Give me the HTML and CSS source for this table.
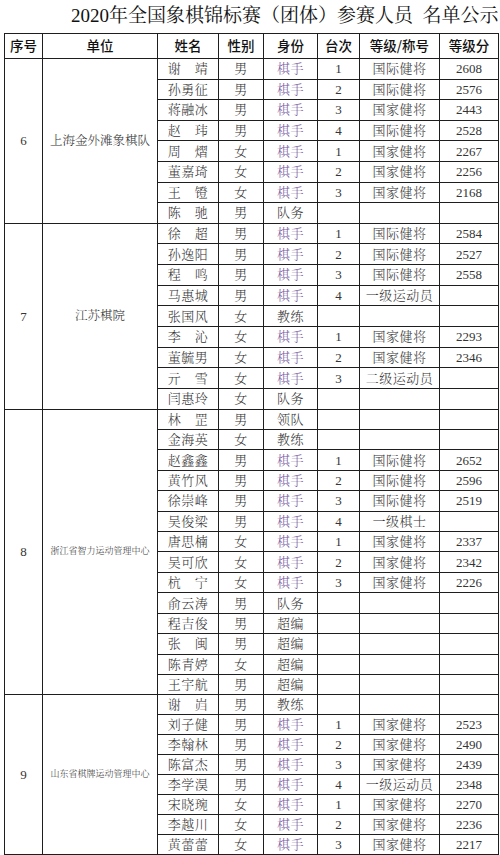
FILE: index.html
```html
<!DOCTYPE html>
<html lang="zh-CN">
<head>
<meta charset="utf-8">
<title>2020年全国象棋锦标赛（团体）参赛人员 名单公示</title>
<link rel="stylesheet" href="styles.css">
</head>
<body>
<div class="title">2020年全国象棋锦标赛（团体）参赛人员&nbsp;&nbsp;名单公示</div>
<table class="roster">
<colgroup>
<col class="c-no"><col class="c-unit"><col class="c-name"><col class="c-sex"><col class="c-role"><col class="c-board"><col class="c-grade"><col class="c-score">
</colgroup>
<thead>
<tr><th>序号</th><th>单位</th><th>姓名</th><th>性别</th><th>身份</th><th>台次</th><th>等级/称号</th><th>等级分</th></tr>
</thead>
<tbody class="g6">
<tr><td class="num" rowspan="8">6</td><td class="unit" rowspan="8">上海金外滩象棋队</td><td>谢　靖</td><td>男</td><td class="player">棋手</td><td class="num">1</td><td>国际健将</td><td class="num">2608</td></tr>
<tr><td>孙勇征</td><td>男</td><td class="player">棋手</td><td class="num">2</td><td>国际健将</td><td class="num">2576</td></tr>
<tr><td>蒋融冰</td><td>男</td><td class="player">棋手</td><td class="num">3</td><td>国家健将</td><td class="num">2443</td></tr>
<tr><td>赵　玮</td><td>男</td><td class="player">棋手</td><td class="num">4</td><td>国际健将</td><td class="num">2528</td></tr>
<tr><td>周　熠</td><td>女</td><td class="player">棋手</td><td class="num">1</td><td>国家健将</td><td class="num">2267</td></tr>
<tr><td>董嘉琦</td><td>女</td><td class="player">棋手</td><td class="num">2</td><td>国家健将</td><td class="num">2256</td></tr>
<tr><td>王　镫</td><td>女</td><td class="player">棋手</td><td class="num">3</td><td>国家健将</td><td class="num">2168</td></tr>
<tr><td>陈　驰</td><td>男</td><td>队务</td><td></td><td></td><td></td></tr>
</tbody>
<tbody class="g7">
<tr><td class="num" rowspan="9">7</td><td class="unit" rowspan="9">江苏棋院</td><td>徐　超</td><td>男</td><td class="player">棋手</td><td class="num">1</td><td>国际健将</td><td class="num">2584</td></tr>
<tr><td>孙逸阳</td><td>男</td><td class="player">棋手</td><td class="num">2</td><td>国际健将</td><td class="num">2527</td></tr>
<tr><td>程　鸣</td><td>男</td><td class="player">棋手</td><td class="num">3</td><td>国际健将</td><td class="num">2558</td></tr>
<tr><td>马惠城</td><td>男</td><td class="player">棋手</td><td class="num">4</td><td>一级运动员</td><td></td></tr>
<tr><td>张国风</td><td>女</td><td>教练</td><td></td><td></td><td></td></tr>
<tr><td>李　沁</td><td>女</td><td class="player">棋手</td><td class="num">1</td><td>国家健将</td><td class="num">2293</td></tr>
<tr><td>董毓男</td><td>女</td><td class="player">棋手</td><td class="num">2</td><td>国家健将</td><td class="num">2346</td></tr>
<tr><td>亓　雪</td><td>女</td><td class="player">棋手</td><td class="num">3</td><td>二级运动员</td><td></td></tr>
<tr><td>闫惠玲</td><td>女</td><td>队务</td><td></td><td></td><td></td></tr>
</tbody>
<tbody class="g8">
<tr><td class="num" rowspan="14">8</td><td class="unit small" rowspan="14">浙江省智力运动管理中心</td><td>林　罡</td><td>男</td><td>领队</td><td></td><td></td><td></td></tr>
<tr><td>金海英</td><td>女</td><td>教练</td><td></td><td></td><td></td></tr>
<tr><td>赵鑫鑫</td><td>男</td><td class="player">棋手</td><td class="num">1</td><td>国际健将</td><td class="num">2652</td></tr>
<tr><td>黄竹风</td><td>男</td><td class="player">棋手</td><td class="num">2</td><td>国际健将</td><td class="num">2596</td></tr>
<tr><td>徐崇峰</td><td>男</td><td class="player">棋手</td><td class="num">3</td><td>国际健将</td><td class="num">2519</td></tr>
<tr><td>吴俊梁</td><td>男</td><td class="player">棋手</td><td class="num">4</td><td>一级棋士</td><td></td></tr>
<tr><td>唐思楠</td><td>女</td><td class="player">棋手</td><td class="num">1</td><td>国家健将</td><td class="num">2337</td></tr>
<tr><td>吴可欣</td><td>女</td><td class="player">棋手</td><td class="num">2</td><td>国家健将</td><td class="num">2342</td></tr>
<tr><td>杭　宁</td><td>女</td><td class="player">棋手</td><td class="num">3</td><td>国家健将</td><td class="num">2226</td></tr>
<tr><td>俞云涛</td><td>男</td><td>队务</td><td></td><td></td><td></td></tr>
<tr><td>程吉俊</td><td>男</td><td>超编</td><td></td><td></td><td></td></tr>
<tr><td>张　闽</td><td>男</td><td>超编</td><td></td><td></td><td></td></tr>
<tr><td>陈青婷</td><td>女</td><td>超编</td><td></td><td></td><td></td></tr>
<tr><td>王宇航</td><td>男</td><td>超编</td><td></td><td></td><td></td></tr>
</tbody>
<tbody class="g9">
<tr><td class="num" rowspan="8">9</td><td class="unit small" rowspan="8">山东省棋牌运动管理中心</td><td>谢　岿</td><td>男</td><td>教练</td><td></td><td></td><td></td></tr>
<tr><td>刘子健</td><td>男</td><td class="player">棋手</td><td class="num">1</td><td>国家健将</td><td class="num">2523</td></tr>
<tr><td>李翰林</td><td>男</td><td class="player">棋手</td><td class="num">2</td><td>国家健将</td><td class="num">2490</td></tr>
<tr><td>陈富杰</td><td>男</td><td class="player">棋手</td><td class="num">3</td><td>国家健将</td><td class="num">2439</td></tr>
<tr><td>李学淏</td><td>男</td><td class="player">棋手</td><td class="num">4</td><td>一级运动员</td><td class="num">2348</td></tr>
<tr><td>宋晓琬</td><td>女</td><td class="player">棋手</td><td class="num">1</td><td>国家健将</td><td class="num">2270</td></tr>
<tr><td>李越川</td><td>女</td><td class="player">棋手</td><td class="num">2</td><td>国家健将</td><td class="num">2236</td></tr>
<tr><td>黄蕾蕾</td><td>女</td><td class="player">棋手</td><td class="num">3</td><td>国家健将</td><td class="num">2217</td></tr>
</tbody>
</table>
</body>
</html>
```

FILE: styles.css
```css
html, body {
  margin: 0;
  padding: 0;
  background: #ffffff;
  overflow: hidden;
}

body {
  width: 500px;
  font-family: "Liberation Serif", "Noto Serif CJK SC", "Noto Sans CJK SC", serif;
  color: #353535;
}

.title {
  height: 33px;
  line-height: 32px;
  padding-left: 71px;
  font-size: 19px;
  color: #111111;
  white-space: nowrap;
  overflow: hidden;
}

.roster {
  margin-left: 4px;
  width: 495px;
  table-layout: fixed;
  border-collapse: collapse;
  border: 1px solid #1e1e1e;
}

.c-no { width: 38px; }
.c-unit { width: 115px; }
.c-name { width: 61px; }
.c-sex { width: 45px; }
.c-role { width: 54px; }
.c-board { width: 42px; }
.c-grade { width: 80px; }
.c-score { width: 59px; }

.roster th,
.roster td {
  border: 1px solid #1e1e1e;
  padding: 0;
  text-align: center;
  vertical-align: middle;
  line-height: 1;
  white-space: nowrap;
  overflow: hidden;
}

.roster th {
  height: 24px;
  font-family: "Noto Sans CJK SC", sans-serif;
  font-weight: 500;
  font-size: 13.5px;
  color: #111111;
}

.roster .g6 tr { height: 20.6px; }
.roster .g7 tr { height: 20.65px; }
.roster .g8 tr { height: 20.43px; }
.roster .g9 tr { height: 19.9px; }

.roster td {
  font-size: 13px;
  font-weight: 300;
  letter-spacing: 0.5px;
}

.roster td.num {
  font-family: "Liberation Serif", serif;
  font-weight: 400;
  font-size: 13px;
  letter-spacing: 0;
}

.roster td.unit {
  font-size: 12.5px;
  letter-spacing: 0;
}

.roster td.unit.small {
  font-size: 9px;
}

.roster td.player {
  color: #7a5aa0;
}
```
